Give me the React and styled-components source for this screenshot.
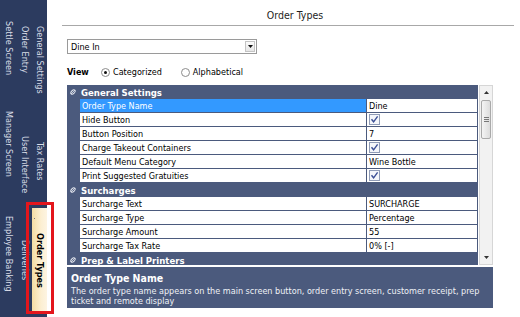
import React from 'react'
import { styled, createGlobalStyle } from 'styled-components'

// Global reset, the page is a fixed 520x317 window
const GlobalStyle = createGlobalStyle`
  html, body {
    margin: 0;
    padding: 0;
    background: #ffffff;
  }
  body {
    font-family: "DejaVu Sans Condensed", "DejaVu Sans", sans-serif;
    font-stretch: condensed;
    font-size: 9px;
    color: #000;
  }
`;

const NAVY = '#4b5a7d';

const Page = styled.div`
  width: 520px;
  height: 317px;
  display: flex;
  overflow: hidden;
`;

// Left vertical tab strip
const Sidebar = styled.div`
  position: relative;
  width: 47px;
  flex-shrink: 0;
  background: #2c3b5f;
  display: flex;
`;
const TabColumn = styled.div`
  width: ${p => p.$w}px;
  display: flex;
  flex-direction: column;
`;
const TabCell = styled.div`
  height: ${p => p.$h}px;
  display: flex;
  align-items: center;
  justify-content: center;
  flex-shrink: 0;
`;
const TabLabel = styled.span`
  writing-mode: vertical-rl;
  color: #d9dde7;
  font-size: 9px;
  white-space: nowrap;
  line-height: 10px;
`;
const ActiveTab = styled.div`
  margin-top: 6px;
  height: 104px;
  display: flex;
  align-items: center;
  justify-content: center;
  background: linear-gradient(to right, #f3dca3, #fcefd2 60%, #fdf4e2);
  position: relative;
`;
const ActiveLabel = styled.span`
  writing-mode: vertical-rl;
  font-weight: bold;
  font-size: 9px;
  color: #000;
  white-space: nowrap;
`;
const Dot = styled.span`
  position: absolute;
  left: 2px;
  top: 10px;
  width: 1px;
  height: 1px;
  background: #777;
`;
// red annotation box drawn over the selected tab
const Highlight = styled.div`
  position: absolute;
  left: 26px;
  top: 202px;
  width: 22px;
  height: 106px;
  border: 3px solid #e3161c;
  pointer-events: none;
`;

// Right side content
const Main = styled.div`
  flex: 1;
  display: flex;
  flex-direction: column;
  padding: 0 28px 0 20px;
`;
const TitleBar = styled.div`
  height: 26px;
  margin: 0 -21px 0 -5px;
  border-bottom: 1px solid #a8a8a8;
  display: flex;
  align-items: flex-end;
  justify-content: center;
  padding-left: 14px;
  font-size: 10.5px;
  color: #1e1e1e;
  padding-bottom: 4px;
  box-sizing: border-box;
`;
const Select = styled.div`
  margin-top: 13px;
  width: 190px;
  height: 15px;
  box-sizing: border-box;
  border: 1px solid #9a9a9a;
  display: flex;
  align-items: center;
  justify-content: space-between;
  padding-left: 3px;
`;
const SelectButton = styled.div`
  width: 10px;
  height: 11px;
  margin-right: 1px;
  border: 1px solid #c4c4c4;
  background: linear-gradient(#fbfbfb, #e6e6e6);
  box-sizing: border-box;
  display: flex;
  align-items: center;
  justify-content: center;
`;
const ViewRow = styled.div`
  margin-top: 10px;
  height: 16px;
  display: flex;
  align-items: center;
`;
const ViewLabel = styled.span`
  font-weight: bold;
  width: 34px;
`;
const RadioItem = styled.label`
  display: flex;
  align-items: center;
  gap: 3px;
  margin-right: ${p => p.$mr || 0}px;
`;
const RadioCircle = styled.span`
  width: 9px;
  height: 9px;
  border-radius: 50%;
  border: 1px solid #8c8c8c;
  box-sizing: border-box;
  background: #fff;
  display: flex;
  align-items: center;
  justify-content: center;
  &::after {
    content: '';
    width: 3px;
    height: 3px;
    border-radius: 50%;
    background: ${p => (p.$on ? '#111' : 'transparent')};
  }
`;

const GridWrap = styled.div`
  margin-top: 5px;
  height: 180px;
  display: flex;
  flex-shrink: 0;
`;
const Table = styled.div`
  width: 411px;
  background: ${NAVY};
  display: flex;
  flex-direction: column;
  overflow: hidden;
`;
const HeaderRow = styled.div`
  height: 14px;
  display: flex;
  align-items: center;
  color: #fff;
  font-weight: bold;
  font-size: 9.5px;
  flex-shrink: 0;
`;
const HeaderIcon = styled.span`
  width: 12px;
  display: flex;
  justify-content: center;
  margin-right: 2px;
`;
const PropRow = styled.div`
  height: 13px;
  margin-bottom: 1px;
  display: grid;
  grid-template-columns: 12px 286px 1fr;
  column-gap: 1px;
  flex-shrink: 0;
`;
const Cell = styled.div`
  background: ${p => (p.$sel ? '#3399ff' : '#ffffff')};
  color: ${p => (p.$sel ? '#ffffff' : '#000')};
  padding-left: 2px;
  display: flex;
  align-items: center;
  white-space: nowrap;
  overflow: hidden;
  margin-right: ${p => (p.$last ? 1 : 0)}px;
`;
const Scrollbar = styled.div`
  width: 14px;
  margin-left: 1px;
  background: #f2f2f2;
  border: 1px solid #d6d6d6;
  box-sizing: border-box;
  display: flex;
  flex-direction: column;
`;
const ScrollArrow = styled.div`
  height: 13px;
  display: flex;
  align-items: center;
  justify-content: center;
`;
const Thumb = styled.div`
  margin: 1px 1px 0;
  height: 37px;
  border: 1px solid #a9a9a9;
  border-radius: 2px;
  background: linear-gradient(to right, #f4f4f4, #dcdcdc);
  display: flex;
  flex-direction: column;
  align-items: center;
  justify-content: center;
  gap: 1px;
`;
const Grip = styled.span`
  width: 5px;
  height: 1px;
  background: #777;
`;
const Spacer = styled.div`
  flex: 1;
`;

const Description = styled.div`
  margin-top: 2px;
  height: 41px;
  flex-shrink: 0;
  background: ${NAVY};
  color: #eef1f6;
  padding: 5px 4px 0;
  box-sizing: border-box;
`;
const DescTitle = styled.div`
  font-weight: bold;
  font-size: 10.5px;
  color: #fff;
  height: 14px;
`;
const DescText = styled.div`
  line-height: 10px;
  font-size: 9px;
`;

const Check = () => (
  <svg width="11" height="11" viewBox="0 0 11 11">
    <rect x="0.5" y="0.5" width="10" height="10" fill="#f4f6fa" stroke="#8f9bb6" />
    <path d="M2.5 5.2 L4.6 7.8 L8.6 2.4" fill="none" stroke="#3b4f95" strokeWidth="1.4" />
  </svg>
);

const Collapse = () => (
  <svg width="6" height="6" viewBox="0 0 6 6">
    <ellipse cx="3" cy="3" rx="2.6" ry="1.6" transform="rotate(-45 3 3)" fill="none" stroke="#e6e9f0" strokeWidth="1" />
    <path d="M1 5 L5 1" stroke="#e6e9f0" strokeWidth="0.8" />
  </svg>
);

const sections = [
  {
    name: 'General Settings',
    rows: [
      ['Order Type Name', 'Dine', true],
      ['Hide Button', 'check'],
      ['Button Position', '7'],
      ['Charge Takeout Containers', 'check'],
      ['Default Menu Category', 'Wine Bottle'],
      ['Print Suggested Gratuities', 'check'],
    ],
  },
  {
    name: 'Surcharges',
    rows: [
      ['Surcharge Text', 'SURCHARGE'],
      ['Surcharge Type', 'Percentage'],
      ['Surcharge Amount', '55'],
      ['Surcharge Tax Rate', '0% [-]'],
    ],
  },
  { name: 'Prep & Label Printers', rows: [] },
];

const App = () => {
  return (
    <Page>
      <GlobalStyle />
      <Sidebar>
        <TabColumn $w={18}>
          <TabCell $h={96}><TabLabel>Settle Screen</TabLabel></TabCell>
          <TabCell $h={96}><TabLabel>Manager Screen</TabLabel></TabCell>
          <TabCell $h={124}><TabLabel>Employee Banking</TabLabel></TabCell>
        </TabColumn>
        <TabColumn $w={14}>
          <TabCell $h={100}><TabLabel>Order Entry</TabLabel></TabCell>
          <TabCell $h={130}><TabLabel>User Interface</TabLabel></TabCell>
          <TabCell $h={60}><TabLabel>Deliveries</TabLabel></TabCell>
        </TabColumn>
        <TabColumn $w={15}>
          <TabCell $h={120}><TabLabel>General Settings</TabLabel></TabCell>
          <TabCell $h={82}><TabLabel>Tax Rates</TabLabel></TabCell>
          <ActiveTab>
            <Dot />
            <ActiveLabel>Order Types</ActiveLabel>
          </ActiveTab>
        </TabColumn>
        <Highlight />
      </Sidebar>

      <Main>
        <TitleBar>Order Types</TitleBar>
        <Select>
          <span>Dine In</span>
          <SelectButton>
            <svg width="5" height="3" viewBox="0 0 5 3"><path d="M0 0 H5 L2.5 3 Z" fill="#111" /></svg>
          </SelectButton>
        </Select>
        <ViewRow>
          <ViewLabel>View</ViewLabel>
          <RadioItem $mr={19}><RadioCircle $on /> Categorized</RadioItem>
          <RadioItem><RadioCircle /> Alphabetical</RadioItem>
        </ViewRow>

        <GridWrap>
          <Table>
            {sections.map(sec => (
              <React.Fragment key={sec.name}>
                <HeaderRow>
                  <HeaderIcon><Collapse /></HeaderIcon>
                  {sec.name}
                </HeaderRow>
                {sec.rows.map(([label, value, sel]) => (
                  <PropRow key={label}>
                    <span />
                    <Cell $sel={sel}>{label}</Cell>
                    <Cell $last>{value === 'check' ? <Check /> : value}</Cell>
                  </PropRow>
                ))}
              </React.Fragment>
            ))}
          </Table>
          <Scrollbar>
            <ScrollArrow>
              <svg width="5" height="3" viewBox="0 0 5 3"><path d="M0 3 H5 L2.5 0 Z" fill="#333" /></svg>
            </ScrollArrow>
            <Thumb>
              <Grip /><Grip /><Grip />
            </Thumb>
            <Spacer />
            <ScrollArrow>
              <svg width="5" height="3" viewBox="0 0 5 3"><path d="M0 0 H5 L2.5 3 Z" fill="#333" /></svg>
            </ScrollArrow>
          </Scrollbar>
        </GridWrap>

        <Description>
          <DescTitle>Order Type Name</DescTitle>
          <DescText>
            The order type name appears on the main screen button, order entry screen, customer receipt, prep
            ticket and remote display
          </DescText>
        </Description>
      </Main>
    </Page>
  )
}

export default App
